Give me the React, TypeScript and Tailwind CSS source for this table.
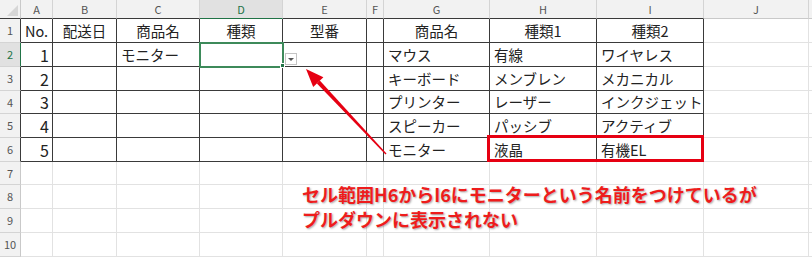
import React from "react";

const colLetters = ["A", "B", "C", "D", "E", "F", "G", "H", "I", "J", ""];

// rows 1..10, columns A..K
const cells: Record<string, string> = {
  "1-0": "No.", "1-1": "配送日", "1-2": "商品名", "1-3": "種類", "1-4": "型番",
  "1-6": "商品名", "1-7": "種類1", "1-8": "種類2",
  "2-0": "1", "3-0": "2", "4-0": "3", "5-0": "4", "6-0": "5",
  "2-2": "モニター",
  "2-6": "マウス", "3-6": "キーボード", "4-6": "プリンター", "5-6": "スピーカー", "6-6": "モニター",
  "2-7": "有線", "3-7": "メンブレン", "4-7": "レーザー", "5-7": "パッシブ", "6-7": "液晶",
  "2-8": "ワイヤレス", "3-8": "メカニカル", "4-8": "インクジェット", "5-8": "アクティブ", "6-8": "有機EL",
};

const inTable = (r: number, c: number) => r >= 1 && r <= 6 && c <= 8;

const Cell = ({ r, c }: { r: number; c: number }) => {
  const text = cells[`${r}-${c}`] ?? "";
  const darkR = inTable(r, c);
  const darkB = inTable(r, c);
  let align = "justify-start pl-[4px]";
  if (r === 1) align = "justify-center";
  else if (c === 0) align = "justify-end pr-[3px]";

  return (
    <div
      className={`relative flex items-center border-r border-b bg-white text-[14.5px] text-[#222] whitespace-nowrap ${align} ${
        darkR ? "border-r-[#3a3a3a]" : "border-r-[#e2e2e2]"
      } ${darkB ? "border-b-[#3a3a3a]" : "border-b-[#e2e2e2]"}`}
    >
      {c === 0 && r >= 2 && r <= 6 ? <span className="text-[16px]">{text}</span> : text}

      {r === 2 && c === 3 && (
        <>
          <div className="absolute z-10 -left-[1px] -top-[1px] w-[85px] h-[26px] border-2 border-[#3d8a5a] pointer-events-none" />
          <div className="absolute z-10 left-[80px] top-[20px] w-[5px] h-[5px] bg-[#217346] border border-white" />
          <div className="absolute z-10 left-[85px] top-[10px] w-[12px] h-[12px] bg-white border border-[#c4c4c4] flex items-center justify-center">
            <div className="w-0 h-0 border-l-[3px] border-r-[3px] border-t-[3px] border-l-transparent border-r-transparent border-t-[#555]" />
          </div>
        </>
      )}

      {r === 6 && c === 7 && (
        <div className="absolute z-10 -left-[3px] -top-[3px] w-[217px] h-[27px] border-[3px] border-[#e60012] pointer-events-none" />
      )}
    </div>
  );
};

export default function App() {
  const rows = Array.from({ length: 10 }, (_, i) => i + 1);

  return (
    <div
      className="relative w-[812px] h-[259px] overflow-hidden bg-white"
      style={{ fontFamily: '"Noto Sans CJK JP", "Noto Sans", sans-serif' }}
    >
      <div className="grid grid-cols-[21px_32px_64px_83px_83px_84px_17px_106px_107px_107px_105px_20px] grid-rows-[19px_24px_24px_24px_23px_24px_24px_23px_24px_24px_24px]">
        {/* corner */}
        <div className="relative bg-[#f2f2f2] border-r border-b border-r-[#c9c9c9] border-b-[#3a3a3a]">
          <div className="absolute right-[2px] bottom-[2px] w-0 h-0 border-l-[11px] border-t-[11px] border-l-transparent border-t-transparent border-r-[11px] border-r-[#d6d6d6]" />
        </div>
        {colLetters.map((l, c) => (
          <div
            key={c}
            className={`flex items-center justify-center border-r border-b text-[11px] ${
              c === 3 ? "bg-[#e1e1e1] text-[#217346] border-b-[#217346]" : "bg-[#f2f2f2] text-[#555]"
            } ${c <= 8 && c !== 3 ? "border-b-[#3a3a3a]" : ""} ${c > 8 ? "border-b-[#c9c9c9]" : ""} border-r-[#d4d4d4]`}
          >
            {l}
          </div>
        ))}

        {rows.map((r) => (
          <React.Fragment key={r}>
            <div
              className={`flex items-center justify-center border-r border-b text-[11px] ${
                r === 2 ? "bg-[#e1e1e1] text-[#217346] border-r-[#217346]" : "bg-[#f2f2f2] text-[#555]"
              } ${r <= 6 && r !== 2 ? "border-r-[#3a3a3a]" : ""} ${r > 6 ? "border-r-[#c9c9c9]" : ""} border-b-[#d4d4d4]`}
            >
              {r}
            </div>
            {colLetters.map((_, c) => (
              <Cell key={c} r={r} c={c} />
            ))}
          </React.Fragment>
        ))}
      </div>

      {/* arrow */}
      <svg className="absolute z-20 left-0 top-0 pointer-events-none" width="812" height="259">
        <polygon points="386.5,153.6 385.5,154.4 316.9,83.6 319.8,80.6" fill="#e60012" />
        <polygon points="306,69 323.4,77.3 313.2,86.9" fill="#e60012" />
      </svg>

      {/* annotation */}
      <div className="absolute z-20 left-[302px] top-[182px] text-[18px] leading-[25px] font-bold text-[#ee1c1c] whitespace-nowrap [text-shadow:1px_1px_2px_rgba(0,0,0,0.35)]">
        <div>セル範囲H6からI6にモニターという名前をつけているが</div>
        <div>プルダウンに表示されない</div>
      </div>
    </div>
  );
}
